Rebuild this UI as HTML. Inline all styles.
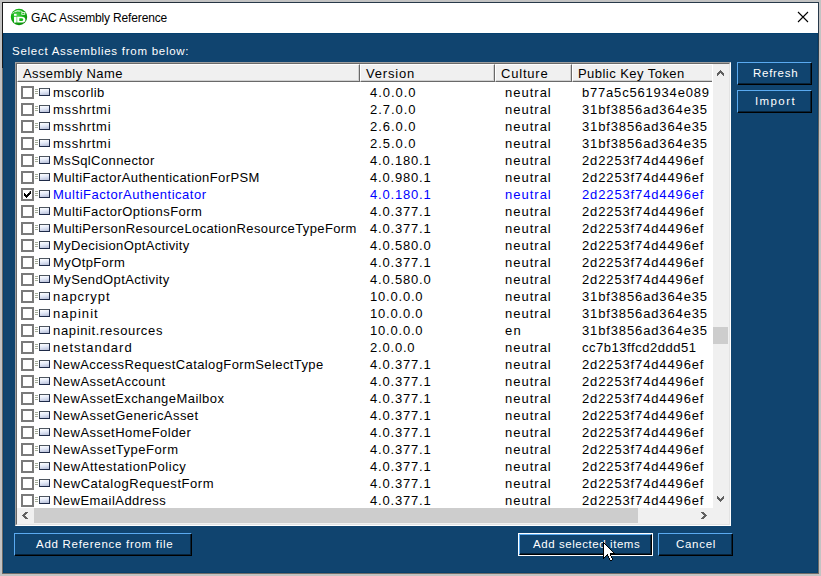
<!DOCTYPE html><html><head><meta charset="utf-8"><style>
*{margin:0;padding:0;box-sizing:border-box}
html,body{width:821px;height:576px;overflow:hidden;background:#c3c3c3;font-family:"Liberation Sans", sans-serif}
.a{position:absolute}
#win{left:2px;top:2px;width:817px;height:572px;background:#6e6a66}
#wtop{left:2px;top:2px;width:817px;height:1px;background:linear-gradient(90deg,#1a1a1a,#27394a 30%,#27394a)}
#wl{left:2px;top:2px;width:1px;height:66px;background:#1a1a1a}
#wr{left:818px;top:2px;width:1px;height:150px;background:linear-gradient(#27394a,#27394a 25%,#6e6a66)}
#title{left:3px;top:3px;width:815px;height:30px;background:#fff}
#client{left:3px;top:33px;width:815px;height:540px;background:#10446f;border:1px solid #05406e}
.t{position:absolute;white-space:nowrap;line-height:17px}
#ttl{left:31px;top:10px;font-size:12px;color:#000;line-height:17px;letter-spacing:-0.15px}
#lbl{left:12px;top:43px;font-size:11.5px;color:#fff;letter-spacing:0.7357142857142857px}
#list{left:15px;top:62px;width:716px;height:464px;background:#fff;border-top:1px solid #a0a0a0;border-left:1px solid #a0a0a0;border-right:1px solid #fff;border-bottom:1px solid #fff}
#list2{left:16px;top:63px;width:714px;height:462px;border-top:1px solid #696969;border-left:1px solid #696969;border-right:1px solid #e3e3e3;border-bottom:1px solid #e3e3e3}
.hd{position:absolute;top:64px;height:18px;background:#f0f0f0;border-top:1px solid #fff;border-left:1px solid #fff;border-bottom:1px solid #696969;border-right:1px solid #696969}
.hd i{position:absolute;left:0;right:0;bottom:0;height:1px;background:#d0d0d0}
.hd b{position:absolute;top:0;bottom:0;right:0;width:1px;background:#d0d0d0}
.ht{position:absolute;top:65px;font-size:13px;color:#000;line-height:17px;white-space:nowrap;letter-spacing:0.3px}
.r{position:absolute;left:17px;width:696px;height:17px}
.c{position:absolute;font-size:13px;line-height:17px;white-space:nowrap;color:#000;top:2px}
.c1{letter-spacing:0.4px}.c2{letter-spacing:0.8px}.c3{letter-spacing:1px}.c4{letter-spacing:0.8px}
.sel .c{color:#0000ff}
.cb{position:absolute;left:4px;top:4px;width:13px;height:13px;border:2px solid #7a7a7a;background:#fff}
.ln{position:absolute;left:18px;width:3px;height:1px;background:#a4ac98}
.ic{position:absolute;left:22px;top:6px;width:11px;height:8px;border:1px solid #1e2a48;border-top-color:#4e5660;border-left-color:#3e4858;background:linear-gradient(170deg,#ffffff 0%,#e4eaf8 45%,#b4bcd6 100%)}
.btn{position:absolute;background:#10446f;border-top:1px solid #5aaaf0;border-left:1px solid #5aaaf0;border-right:1px solid #000;border-bottom:1px solid #000;box-shadow:inset -1px -1px 0 #06233b;color:#fff;font-size:11px;text-align:center;line-height:20px;white-space:nowrap;letter-spacing:0.9px}
.bt{position:absolute;color:#fff;font-size:11.5px;line-height:20px;white-space:nowrap}
</style></head><body>
<div id="win" class="a"></div><div id="wtop" class="a"></div><div id="wl" class="a"></div><div id="wr" class="a"></div><div id="title" class="a"></div><div id="client" class="a"></div>
<svg class="a" style="left:0;top:0" width="40" height="40" viewBox="0 0 40 40">
<defs><radialGradient id="g" cx="0.42" cy="0.4" r="0.62"><stop offset="0" stop-color="#4ad04a"/><stop offset="0.55" stop-color="#14b414"/><stop offset="1" stop-color="#088808"/></radialGradient></defs>
<circle cx="19" cy="17" r="8.2" fill="url(#g)"/>
<path d="M12.5 13.5 q4 -4.5 10 -1.8" stroke="#dff5df" stroke-width="1" fill="none" opacity="0.85"/>
<path d="M15 12 q2.5 -1.8 5 -0.6" stroke="#ffffff" stroke-width="0.8" fill="none" opacity="0.7"/>
<rect x="21.8" y="12.6" width="3" height="1.7" fill="none" stroke="#fff" stroke-width="0.8"/>
<rect x="14" y="13.8" width="2.6" height="2" fill="#fff"/>
<rect x="14" y="16.8" width="2.6" height="5.8" fill="#fff"/>
<path d="M17.2 16.8 h4.3 a3.9 2.9 0 0 1 0 5.8 h-4.3z" fill="#fff"/>
<path d="M19.3 18.3 h2.1 a1.9 1.4 0 0 1 0 2.8 h-2.1z" fill="#18bc18"/>
</svg>
<div id="ttl" class="t">GAC Assembly Reference</div>
<svg class="a" style="left:797px;top:11px" width="12" height="12" viewBox="0 0 12 12"><path d="M1 1L11 11M11 1L1 11" stroke="#000" stroke-width="1.1"/></svg>
<div id="lbl" class="t">Select Assemblies from below:</div>
<div id="list" class="a"></div><div id="list2" class="a"></div>
<div class="hd" style="left:17px;width:343px"><i></i><b></b></div>
<div class="hd" style="left:360px;width:135px"><i></i><b></b></div>
<div class="hd" style="left:495px;width:77px"><i></i><b></b></div>
<div class="hd" style="left:572px;width:140px;border-right:none"><i></i></div>
<div class="ht" style="left:23px;letter-spacing:0.4px">Assembly Name</div>
<div class="ht" style="left:366px;letter-spacing:0.8px">Version</div>
<div class="ht" style="left:501px;letter-spacing:0.8px">Culture</div>
<div class="ht" style="left:578px;letter-spacing:0.45px">Public Key Token</div>
<div class="r" style="top:82px"><div class="cb"></div><div class="ln" style="top:7px"></div><div class="ln" style="top:9px"></div><div class="ln" style="top:11px"></div><div class="ic"></div><div class="c" style="left:36px;letter-spacing:0.400px">mscorlib</div><div class="c" style="left:353px;letter-spacing:0.967px">4.0.0.0</div><div class="c" style="left:488px;letter-spacing:1.000px">neutral</div><div class="c" style="left:565px;letter-spacing:0.800px">b77a5c561934e089</div></div>
<div class="r" style="top:99px"><div class="cb"></div><div class="ln" style="top:7px"></div><div class="ln" style="top:9px"></div><div class="ln" style="top:11px"></div><div class="ic"></div><div class="c" style="left:36px;letter-spacing:0.686px">msshrtmi</div><div class="c" style="left:353px;letter-spacing:0.967px">2.7.0.0</div><div class="c" style="left:488px;letter-spacing:1.000px">neutral</div><div class="c" style="left:565px;letter-spacing:0.867px">31bf3856ad364e35</div></div>
<div class="r" style="top:116px"><div class="cb"></div><div class="ln" style="top:7px"></div><div class="ln" style="top:9px"></div><div class="ln" style="top:11px"></div><div class="ic"></div><div class="c" style="left:36px;letter-spacing:0.686px">msshrtmi</div><div class="c" style="left:353px;letter-spacing:0.967px">2.6.0.0</div><div class="c" style="left:488px;letter-spacing:1.000px">neutral</div><div class="c" style="left:565px;letter-spacing:0.867px">31bf3856ad364e35</div></div>
<div class="r" style="top:133px"><div class="cb"></div><div class="ln" style="top:7px"></div><div class="ln" style="top:9px"></div><div class="ln" style="top:11px"></div><div class="ic"></div><div class="c" style="left:36px;letter-spacing:0.686px">msshrtmi</div><div class="c" style="left:353px;letter-spacing:0.967px">2.5.0.0</div><div class="c" style="left:488px;letter-spacing:1.000px">neutral</div><div class="c" style="left:565px;letter-spacing:0.867px">31bf3856ad364e35</div></div>
<div class="r" style="top:150px"><div class="cb"></div><div class="ln" style="top:7px"></div><div class="ln" style="top:9px"></div><div class="ln" style="top:11px"></div><div class="ic"></div><div class="c" style="left:36px;letter-spacing:0.400px">MsSqlConnector</div><div class="c" style="left:353px;letter-spacing:0.800px">4.0.180.1</div><div class="c" style="left:488px;letter-spacing:1.000px">neutral</div><div class="c" style="left:565px;letter-spacing:0.867px">2d2253f74d4496ef</div></div>
<div class="r" style="top:167px"><div class="cb"></div><div class="ln" style="top:7px"></div><div class="ln" style="top:9px"></div><div class="ln" style="top:11px"></div><div class="ic"></div><div class="c" style="left:36px;letter-spacing:0.400px">MultiFactorAuthenticationForPSM</div><div class="c" style="left:353px;letter-spacing:0.800px">4.0.980.1</div><div class="c" style="left:488px;letter-spacing:1.000px">neutral</div><div class="c" style="left:565px;letter-spacing:0.867px">2d2253f74d4496ef</div></div>
<div class="r sel" style="top:184px"><div class="cb"><svg style="position:absolute;left:1px;top:1px" width="7" height="7" viewBox="0 0 7 7"><path d="M6 0h1v3h-1v1h-1v1h-1v1h-1v1h-1v-1h-1v-1h-1v-3h1v1h1v1h1v-1h1v-1h1z" fill="#000"/></svg></div><div class="ln" style="top:7px"></div><div class="ln" style="top:9px"></div><div class="ln" style="top:11px"></div><div class="ic"></div><div class="c" style="left:36px;letter-spacing:0.530px">MultiFactorAuthenticator</div><div class="c" style="left:353px;letter-spacing:0.800px">4.0.180.1</div><div class="c" style="left:488px;letter-spacing:1.000px">neutral</div><div class="c" style="left:565px;letter-spacing:0.867px">2d2253f74d4496ef</div></div>
<div class="r" style="top:201px"><div class="cb"></div><div class="ln" style="top:7px"></div><div class="ln" style="top:9px"></div><div class="ln" style="top:11px"></div><div class="ic"></div><div class="c" style="left:36px;letter-spacing:0.448px">MultiFactorOptionsForm</div><div class="c" style="left:353px;letter-spacing:0.800px">4.0.377.1</div><div class="c" style="left:488px;letter-spacing:1.000px">neutral</div><div class="c" style="left:565px;letter-spacing:0.867px">2d2253f74d4496ef</div></div>
<div class="r" style="top:218px"><div class="cb"></div><div class="ln" style="top:7px"></div><div class="ln" style="top:9px"></div><div class="ln" style="top:11px"></div><div class="ic"></div><div class="c" style="left:36px;letter-spacing:0.376px">MultiPersonResourceLocationResourceTypeForm</div><div class="c" style="left:353px;letter-spacing:0.800px">4.0.377.1</div><div class="c" style="left:488px;letter-spacing:1.000px">neutral</div><div class="c" style="left:565px;letter-spacing:0.867px">2d2253f74d4496ef</div></div>
<div class="r" style="top:235px"><div class="cb"></div><div class="ln" style="top:7px"></div><div class="ln" style="top:9px"></div><div class="ln" style="top:11px"></div><div class="ic"></div><div class="c" style="left:36px;letter-spacing:0.350px">MyDecisionOptActivity</div><div class="c" style="left:353px;letter-spacing:0.800px">4.0.580.0</div><div class="c" style="left:488px;letter-spacing:1.000px">neutral</div><div class="c" style="left:565px;letter-spacing:0.867px">2d2253f74d4496ef</div></div>
<div class="r" style="top:252px"><div class="cb"></div><div class="ln" style="top:7px"></div><div class="ln" style="top:9px"></div><div class="ln" style="top:11px"></div><div class="ic"></div><div class="c" style="left:36px;letter-spacing:0.400px">MyOtpForm</div><div class="c" style="left:353px;letter-spacing:0.800px">4.0.377.1</div><div class="c" style="left:488px;letter-spacing:1.000px">neutral</div><div class="c" style="left:565px;letter-spacing:0.867px">2d2253f74d4496ef</div></div>
<div class="r" style="top:269px"><div class="cb"></div><div class="ln" style="top:7px"></div><div class="ln" style="top:9px"></div><div class="ln" style="top:11px"></div><div class="ic"></div><div class="c" style="left:36px;letter-spacing:0.400px">MySendOptActivity</div><div class="c" style="left:353px;letter-spacing:0.800px">4.0.580.0</div><div class="c" style="left:488px;letter-spacing:1.000px">neutral</div><div class="c" style="left:565px;letter-spacing:0.867px">2d2253f74d4496ef</div></div>
<div class="r" style="top:286px"><div class="cb"></div><div class="ln" style="top:7px"></div><div class="ln" style="top:9px"></div><div class="ln" style="top:11px"></div><div class="ic"></div><div class="c" style="left:36px;letter-spacing:0.971px">napcrypt</div><div class="c" style="left:353px;letter-spacing:0.800px">10.0.0.0</div><div class="c" style="left:488px;letter-spacing:1.000px">neutral</div><div class="c" style="left:565px;letter-spacing:0.867px">31bf3856ad364e35</div></div>
<div class="r" style="top:303px"><div class="cb"></div><div class="ln" style="top:7px"></div><div class="ln" style="top:9px"></div><div class="ln" style="top:11px"></div><div class="ic"></div><div class="c" style="left:36px;letter-spacing:1.067px">napinit</div><div class="c" style="left:353px;letter-spacing:0.800px">10.0.0.0</div><div class="c" style="left:488px;letter-spacing:1.000px">neutral</div><div class="c" style="left:565px;letter-spacing:0.867px">31bf3856ad364e35</div></div>
<div class="r" style="top:320px"><div class="cb"></div><div class="ln" style="top:7px"></div><div class="ln" style="top:9px"></div><div class="ln" style="top:11px"></div><div class="ic"></div><div class="c" style="left:36px;letter-spacing:0.650px">napinit.resources</div><div class="c" style="left:353px;letter-spacing:0.800px">10.0.0.0</div><div class="c" style="left:488px;letter-spacing:1.300px">en</div><div class="c" style="left:565px;letter-spacing:0.867px">31bf3856ad364e35</div></div>
<div class="r" style="top:337px"><div class="cb"></div><div class="ln" style="top:7px"></div><div class="ln" style="top:9px"></div><div class="ln" style="top:11px"></div><div class="ic"></div><div class="c" style="left:36px;letter-spacing:1.000px">netstandard</div><div class="c" style="left:353px;letter-spacing:0.800px">2.0.0.0</div><div class="c" style="left:488px;letter-spacing:1.000px">neutral</div><div class="c" style="left:565px;letter-spacing:0.533px">cc7b13ffcd2ddd51</div></div>
<div class="r" style="top:354px"><div class="cb"></div><div class="ln" style="top:7px"></div><div class="ln" style="top:9px"></div><div class="ln" style="top:11px"></div><div class="ic"></div><div class="c" style="left:36px;letter-spacing:0.400px">NewAccessRequestCatalogFormSelectType</div><div class="c" style="left:353px;letter-spacing:0.800px">4.0.377.1</div><div class="c" style="left:488px;letter-spacing:1.000px">neutral</div><div class="c" style="left:565px;letter-spacing:0.867px">2d2253f74d4496ef</div></div>
<div class="r" style="top:371px"><div class="cb"></div><div class="ln" style="top:7px"></div><div class="ln" style="top:9px"></div><div class="ln" style="top:11px"></div><div class="ic"></div><div class="c" style="left:36px;letter-spacing:0.471px">NewAssetAccount</div><div class="c" style="left:353px;letter-spacing:0.800px">4.0.377.1</div><div class="c" style="left:488px;letter-spacing:1.000px">neutral</div><div class="c" style="left:565px;letter-spacing:0.867px">2d2253f74d4496ef</div></div>
<div class="r" style="top:388px"><div class="cb"></div><div class="ln" style="top:7px"></div><div class="ln" style="top:9px"></div><div class="ln" style="top:11px"></div><div class="ic"></div><div class="c" style="left:36px;letter-spacing:0.445px">NewAssetExchangeMailbox</div><div class="c" style="left:353px;letter-spacing:0.800px">4.0.377.1</div><div class="c" style="left:488px;letter-spacing:1.000px">neutral</div><div class="c" style="left:565px;letter-spacing:0.867px">2d2253f74d4496ef</div></div>
<div class="r" style="top:405px"><div class="cb"></div><div class="ln" style="top:7px"></div><div class="ln" style="top:9px"></div><div class="ln" style="top:11px"></div><div class="ic"></div><div class="c" style="left:36px;letter-spacing:0.453px">NewAssetGenericAsset</div><div class="c" style="left:353px;letter-spacing:0.800px">4.0.377.1</div><div class="c" style="left:488px;letter-spacing:1.000px">neutral</div><div class="c" style="left:565px;letter-spacing:0.867px">2d2253f74d4496ef</div></div>
<div class="r" style="top:422px"><div class="cb"></div><div class="ln" style="top:7px"></div><div class="ln" style="top:9px"></div><div class="ln" style="top:11px"></div><div class="ic"></div><div class="c" style="left:36px;letter-spacing:0.459px">NewAssetHomeFolder</div><div class="c" style="left:353px;letter-spacing:0.800px">4.0.377.1</div><div class="c" style="left:488px;letter-spacing:1.000px">neutral</div><div class="c" style="left:565px;letter-spacing:0.867px">2d2253f74d4496ef</div></div>
<div class="r" style="top:439px"><div class="cb"></div><div class="ln" style="top:7px"></div><div class="ln" style="top:9px"></div><div class="ln" style="top:11px"></div><div class="ic"></div><div class="c" style="left:36px;letter-spacing:0.533px">NewAssetTypeForm</div><div class="c" style="left:353px;letter-spacing:0.800px">4.0.377.1</div><div class="c" style="left:488px;letter-spacing:1.000px">neutral</div><div class="c" style="left:565px;letter-spacing:0.867px">2d2253f74d4496ef</div></div>
<div class="r" style="top:456px"><div class="cb"></div><div class="ln" style="top:7px"></div><div class="ln" style="top:9px"></div><div class="ln" style="top:11px"></div><div class="ic"></div><div class="c" style="left:36px;letter-spacing:0.558px">NewAttestationPolicy</div><div class="c" style="left:353px;letter-spacing:0.800px">4.0.377.1</div><div class="c" style="left:488px;letter-spacing:1.000px">neutral</div><div class="c" style="left:565px;letter-spacing:0.867px">2d2253f74d4496ef</div></div>
<div class="r" style="top:473px"><div class="cb"></div><div class="ln" style="top:7px"></div><div class="ln" style="top:9px"></div><div class="ln" style="top:11px"></div><div class="ic"></div><div class="c" style="left:36px;letter-spacing:0.550px">NewCatalogRequestForm</div><div class="c" style="left:353px;letter-spacing:0.800px">4.0.377.1</div><div class="c" style="left:488px;letter-spacing:1.000px">neutral</div><div class="c" style="left:565px;letter-spacing:0.867px">2d2253f74d4496ef</div></div>
<div class="r" style="top:490px"><div class="cb"></div><div class="ln" style="top:7px"></div><div class="ln" style="top:9px"></div><div class="ln" style="top:11px"></div><div class="ic"></div><div class="c" style="left:36px;letter-spacing:0.471px">NewEmailAddress</div><div class="c" style="left:353px;letter-spacing:0.800px">4.0.377.1</div><div class="c" style="left:488px;letter-spacing:1.000px">neutral</div><div class="c" style="left:565px;letter-spacing:0.867px">2d2253f74d4496ef</div></div>
<div class="a" style="left:712px;top:64px;width:1px;height:444px;background:#fff"></div>
<div class="a" style="left:713px;top:64px;width:16px;height:460px;background:#f0f0f0"></div>
<div class="a" style="left:713px;top:327px;width:15px;height:17px;background:#cdcdcd"></div>
<div class="a" style="left:17px;top:508px;width:696px;height:16px;background:#f0f0f0"></div>
<div class="a" style="left:34px;top:508px;width:604px;height:15px;background:#cdcdcd"></div>
<svg class="a" style="left:0;top:0" width="821" height="576" shape-rendering="crispEdges"><path d="M720 70h1v1h-1zM719 71h1v1h-1zM720 71h1v1h-1zM721 71h1v1h-1zM718 72h1v1h-1zM719 72h1v1h-1zM720 72h1v1h-1zM721 72h1v1h-1zM722 72h1v1h-1zM717 73h1v1h-1zM718 73h1v1h-1zM719 73h1v1h-1zM721 73h1v1h-1zM722 73h1v1h-1zM723 73h1v1h-1zM717 74h1v1h-1zM718 74h1v1h-1zM722 74h1v1h-1zM723 74h1v1h-1zM717 75h1v1h-1zM723 75h1v1h-1z" fill="#606060"/><path d="M720 501h1v1h-1zM719 500h1v1h-1zM720 500h1v1h-1zM721 500h1v1h-1zM718 499h1v1h-1zM719 499h1v1h-1zM720 499h1v1h-1zM721 499h1v1h-1zM722 499h1v1h-1zM717 498h1v1h-1zM718 498h1v1h-1zM719 498h1v1h-1zM721 498h1v1h-1zM722 498h1v1h-1zM723 498h1v1h-1zM717 497h1v1h-1zM718 497h1v1h-1zM722 497h1v1h-1zM723 497h1v1h-1zM717 496h1v1h-1zM723 496h1v1h-1z" fill="#606060"/><path d="M22 515h1v1h-1zM23 514h1v1h-1zM23 515h1v1h-1zM23 516h1v1h-1zM24 513h1v1h-1zM24 514h1v1h-1zM24 515h1v1h-1zM24 516h1v1h-1zM24 517h1v1h-1zM25 512h1v1h-1zM25 513h1v1h-1zM25 514h1v1h-1zM25 516h1v1h-1zM25 517h1v1h-1zM25 518h1v1h-1zM26 512h1v1h-1zM26 513h1v1h-1zM26 517h1v1h-1zM26 518h1v1h-1zM27 512h1v1h-1zM27 518h1v1h-1z" fill="#606060"/><path d="M706 515h1v1h-1zM705 514h1v1h-1zM705 515h1v1h-1zM705 516h1v1h-1zM704 513h1v1h-1zM704 514h1v1h-1zM704 515h1v1h-1zM704 516h1v1h-1zM704 517h1v1h-1zM703 512h1v1h-1zM703 513h1v1h-1zM703 514h1v1h-1zM703 516h1v1h-1zM703 517h1v1h-1zM703 518h1v1h-1zM702 512h1v1h-1zM702 513h1v1h-1zM702 517h1v1h-1zM702 518h1v1h-1zM701 512h1v1h-1zM701 518h1v1h-1z" fill="#606060"/></svg>
<div class="btn" style="left:737px;top:62px;width:75px;height:23px"></div>
<div class="bt" style="left:753px;top:63px;letter-spacing:0.717px">Refresh</div>
<div class="btn" style="left:737px;top:90px;width:75px;height:23px"></div>
<div class="bt" style="left:755px;top:91px;letter-spacing:1.400px">Import</div>
<div class="btn" style="left:14px;top:533px;width:178px;height:23px"></div>
<div class="bt" style="left:36px;top:534px;letter-spacing:0.723px">Add Reference from file</div>
<div class="a" style="left:518px;top:533px;width:135px;height:23px;border:1px solid #fff"></div>
<div class="btn" style="left:519px;top:534px;width:133px;height:21px"></div>
<div class="bt" style="left:533px;top:534px;letter-spacing:0.565px">Add selected items</div>
<div class="btn" style="left:658px;top:533px;width:75px;height:23px"></div>
<div class="bt" style="left:676px;top:534px;letter-spacing:0.700px">Cancel</div>
<svg class="a" style="left:0;top:0" width="821" height="576" shape-rendering="crispEdges"><path d="M603 542h1v1h-1zM603 543h1v1h-1zM604 543h1v1h-1zM603 544h1v1h-1zM605 544h1v1h-1zM603 545h1v1h-1zM606 545h1v1h-1zM603 546h1v1h-1zM607 546h1v1h-1zM603 547h1v1h-1zM608 547h1v1h-1zM603 548h1v1h-1zM609 548h1v1h-1zM603 549h1v1h-1zM610 549h1v1h-1zM603 550h1v1h-1zM611 550h1v1h-1zM603 551h1v1h-1zM612 551h1v1h-1zM603 552h1v1h-1zM613 552h1v1h-1zM603 553h1v1h-1zM610 553h1v1h-1zM611 553h1v1h-1zM612 553h1v1h-1zM613 553h1v1h-1zM614 553h1v1h-1zM603 554h1v1h-1zM607 554h1v1h-1zM610 554h1v1h-1zM603 555h1v1h-1zM606 555h1v1h-1zM607 555h1v1h-1zM610 555h1v1h-1zM603 556h1v1h-1zM605 556h1v1h-1zM608 556h1v1h-1zM611 556h1v1h-1zM603 557h1v1h-1zM604 557h1v1h-1zM608 557h1v1h-1zM611 557h1v1h-1zM603 558h1v1h-1zM609 558h1v1h-1zM612 558h1v1h-1zM609 559h1v1h-1zM612 559h1v1h-1zM610 560h1v1h-1zM611 560h1v1h-1z" fill="#000"/><path d="M604 544h1v1h-1zM604 545h1v1h-1zM605 545h1v1h-1zM604 546h1v1h-1zM605 546h1v1h-1zM606 546h1v1h-1zM604 547h1v1h-1zM605 547h1v1h-1zM606 547h1v1h-1zM607 547h1v1h-1zM604 548h1v1h-1zM605 548h1v1h-1zM606 548h1v1h-1zM607 548h1v1h-1zM608 548h1v1h-1zM604 549h1v1h-1zM605 549h1v1h-1zM606 549h1v1h-1zM607 549h1v1h-1zM608 549h1v1h-1zM609 549h1v1h-1zM604 550h1v1h-1zM605 550h1v1h-1zM606 550h1v1h-1zM607 550h1v1h-1zM608 550h1v1h-1zM609 550h1v1h-1zM610 550h1v1h-1zM604 551h1v1h-1zM605 551h1v1h-1zM606 551h1v1h-1zM607 551h1v1h-1zM608 551h1v1h-1zM609 551h1v1h-1zM610 551h1v1h-1zM611 551h1v1h-1zM604 552h1v1h-1zM605 552h1v1h-1zM606 552h1v1h-1zM607 552h1v1h-1zM608 552h1v1h-1zM609 552h1v1h-1zM610 552h1v1h-1zM611 552h1v1h-1zM612 552h1v1h-1zM604 553h1v1h-1zM605 553h1v1h-1zM606 553h1v1h-1zM607 553h1v1h-1zM608 553h1v1h-1zM609 553h1v1h-1zM604 554h1v1h-1zM605 554h1v1h-1zM606 554h1v1h-1zM608 554h1v1h-1zM609 554h1v1h-1zM604 555h1v1h-1zM605 555h1v1h-1zM608 555h1v1h-1zM609 555h1v1h-1zM604 556h1v1h-1zM609 556h1v1h-1zM610 556h1v1h-1zM609 557h1v1h-1zM610 557h1v1h-1zM610 558h1v1h-1zM611 558h1v1h-1zM610 559h1v1h-1zM611 559h1v1h-1z" fill="#fff"/></svg>
</body></html>
